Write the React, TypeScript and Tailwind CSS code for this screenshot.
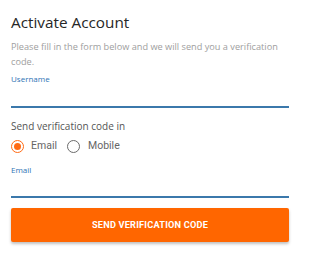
export default function App() {
  return (
    <div className="w-[300px] h-[257px] bg-white px-[11px] pt-[11px] font-['Open_Sans',sans-serif]">
      {/* Header */}
      <h1 className="text-[15.3px] leading-[22px] font-medium text-[#262626]">Activate Account</h1>
      <p className="mt-[6px] text-[9.2px] leading-[15px] text-[#9e9e9e]">
        Please fill in the form below and we will send you a verification code.
      </p>

      {/* Username */}
      <label className="block mt-[4px] text-[8px] leading-[11px] text-[#2f74b5]">Username</label>
      <div className="h-[24px] border-b-2 border-[#3b78ab]" />

      {/* Channel */}
      <div className="mt-[12px] text-[10px] leading-[13px] text-[#555555]">Send verification code in</div>
      <div className="mt-[4px] flex items-center h-[18px] font-['Roboto',sans-serif] text-[10.5px] text-[#666666]">
        <span className="flex items-center justify-center w-[13px] h-[13px] rounded-full border-[1.5px] border-[#ff6a13]">
          <span className="w-[7px] h-[7px] rounded-full bg-[#ff6a13]" />
        </span>
        <span className="ml-[7px]">Email</span>
        <span className="ml-[10px] w-[13px] h-[13px] rounded-full border-[1.5px] border-[#6b6b6b]" />
        <span className="ml-[8px]">Mobile</span>
      </div>

      {/* Email */}
      <label className="block mt-[9px] text-[8px] leading-[11px] text-[#2f74b5]">Email</label>
      <div className="h-[23px] border-b-2 border-[#3b78ab]" />

      <button className="mt-[10px] w-full h-[34px] rounded-[2px] bg-[#ff6600] text-white font-['Roboto',sans-serif] font-bold text-[9.2px] tracking-[0.2px] shadow-[0_2px_3px_rgba(0,0,0,0.25)]">
        SEND VERIFICATION CODE
      </button>
    </div>
  );
}
